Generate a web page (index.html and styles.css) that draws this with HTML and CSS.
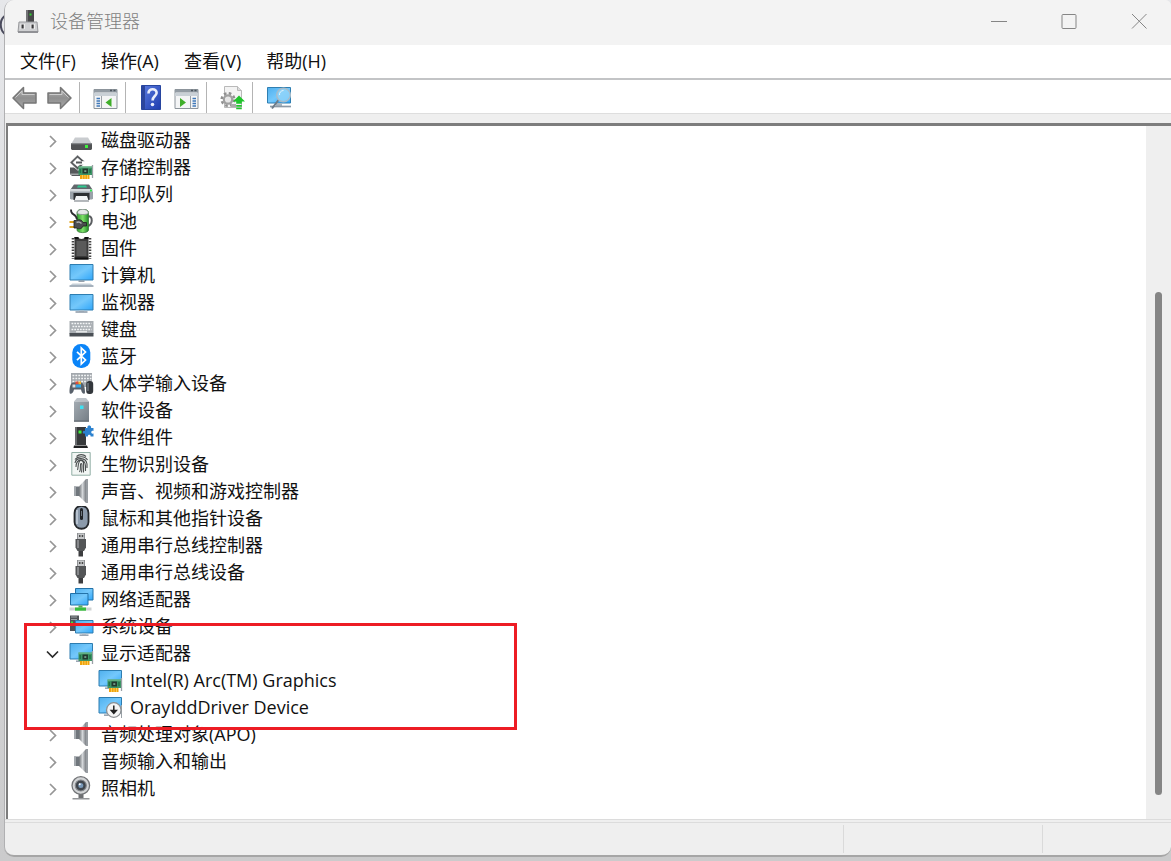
FILE: index.html
```html
<!DOCTYPE html>
<html lang="zh-CN">
<head>
  <meta charset="UTF-8">
  <meta name="viewport" content="width=device-width, initial-scale=1.0">
  <title>设备管理器</title>
  <link rel="stylesheet" href="styles.css">
</head>
<body>
  <!-- 图标定义 -->
  <svg class="icon-defs" aria-hidden="true">
    <defs>
      <linearGradient id="g-screen" x1="0" y1="0" x2="1" y2="1">
        <stop offset="0" stop-color="#4fb0ee"/><stop offset=".5" stop-color="#74c8fb"/><stop offset="1" stop-color="#2ea6fb"/>
      </linearGradient>
      <linearGradient id="g-metal" x1="0" y1="0" x2="1" y2="0">
        <stop offset="0" stop-color="#6f7377"/><stop offset=".5" stop-color="#d3d6d9"/><stop offset="1" stop-color="#7b7f84"/>
      </linearGradient>
      <linearGradient id="g-arrow" x1="0" y1="0" x2="0" y2="1">
        <stop offset="0" stop-color="#b5b5b5"/><stop offset=".5" stop-color="#8f8f8f"/><stop offset="1" stop-color="#a9a9a9"/>
      </linearGradient>
      <linearGradient id="g-help" x1="0" y1="0" x2="1" y2="1">
        <stop offset="0" stop-color="#5b7ce0"/><stop offset="1" stop-color="#1d3cae"/>
      </linearGradient>
      <linearGradient id="g-tower" x1="0" y1="0" x2="1" y2="1">
        <stop offset="0" stop-color="#a3abb2"/><stop offset="1" stop-color="#747d85"/>
      </linearGradient>
      <linearGradient id="g-green" x1="0" y1="0" x2="1" y2="0">
        <stop offset="0" stop-color="#2f9e2f"/><stop offset=".5" stop-color="#7fe06a"/><stop offset="1" stop-color="#1f8a26"/>
      </linearGradient>
    </defs>

    <symbol id="i-app" viewBox="0 0 22 25">
      <path d="M9 1h8v13H9z" fill="#48484a"/><path d="M9 1h2v13H9z" fill="#737376"/>
      <path d="M12.500 4.500h2v2h-2z" fill="#2fd02f"/>
      <path d="M2 13h18l1 10H1z" fill="#cfd0d2" stroke="#97989b"/>
      <path d="M1 22h20v2H1z" fill="#909195"/>
      <path d="M3.500 15h4.500v5H3.500zM13.500 15H18v5h-4.500z" fill="#eee"/><path d="M4.500 15.500h2.200v4H4.500zM14.500 15.500h2.200v4h-2.200z" fill="#3a3a3c"/>
    </symbol>
    <symbol id="i-back" viewBox="0 0 25 25">
      <path d="M1 13 11.500 2.500V8H24v10H11.500v5.500z" fill="url(#g-arrow)" stroke="#777" stroke-width="1.500" stroke-linejoin="round"/>
      <path d="M3.500 12.500 10 6v3.500h12.500" fill="none" stroke="#ccc"/>
    </symbol>
    <symbol id="i-forward" viewBox="0 0 25 25">
      <path d="M24 13 13.500 2.500V8H1v10h12.500v5.500z" fill="url(#g-arrow)" stroke="#777" stroke-width="1.500" stroke-linejoin="round"/>
      <path d="M2.500 9.500H15V6l6.500 6.500" fill="none" stroke="#ccc"/>
    </symbol>
    <symbol id="i-tree-pane" viewBox="0 0 25 25">
      <path d="M1 4.500h23v19H1z" fill="#f4f5f6" stroke="#8c949b"/>
      <path d="M1 5h23v2.500H1z" fill="#929ba3"/><path d="M1 8h23v3H1z" fill="#c9d0d6"/>
      <path d="M17 5.500h2M20.500 5.500h2" stroke="#4d565e" stroke-width="1.500"/>
      <path d="M8.500 11v12.500" stroke="#9ba2a8"/>
      <path d="M3.500 13.500H7M3.500 16H7M3.500 18.500H7M3.500 21H7" stroke="#3f78b9" stroke-width="1.300"/>
      <path d="M18.500 13v9l-6-4.500z" fill="#3fae2a"/>
    </symbol>
    <symbol id="i-action-pane" viewBox="0 0 25 25">
      <path d="M1 4.500h23v19H1z" fill="#f4f5f6" stroke="#8c949b"/>
      <path d="M1 5h23v2.500H1z" fill="#929ba3"/><path d="M1 8h23v3H1z" fill="#c9d0d6"/>
      <path d="M17 5.500h2M20.500 5.500h2" stroke="#4d565e" stroke-width="1.500"/>
      <path d="M16.500 11v12.500" stroke="#9ba2a8"/>
      <path d="M18.500 13.500H22M18.500 16H22M18.500 18.500H22M18.500 21H22" stroke="#3f78b9" stroke-width="1.300"/>
      <path d="M6 13v9l6-4.500z" fill="#3fae2a"/>
    </symbol>
    <symbol id="i-help" viewBox="0 0 25 25">
      <path d="M2.500.5h19v24h-19z" fill="url(#g-help)" stroke="#27459f"/>
      <path d="M3 1h3v23H3z" fill="#2b459c"/>
      <path d="M9.500 8.500C9.300 2.800 18 3 17.600 8c-.2 3-4 3.300-4 7.500" fill="none" stroke="#e9edfb" stroke-width="2.600"/>
      <circle cx="13.500" cy="19.500" r="1.800" fill="#e9edfb"/>
    </symbol>
    <symbol id="i-update" viewBox="0 0 25 25">
      <path d="M4.500 1.500h13l4 4v17h-17z" fill="#f3f3f3" stroke="#b9b9b9"/><path d="M17.500 1.500v4h4" fill="#ddd" stroke="#b9b9b9"/>
      <circle cx="8" cy="14.500" r="6.300" fill="none" stroke="#8f8f8f" stroke-width="2.500" stroke-dasharray="2.600 2.350"/>
      <circle cx="8" cy="14.500" r="4.200" fill="#e6e6e6" stroke="#a0a0a0" stroke-width="2.200"/>
      <path d="M11 20.500h5" stroke="#aaa" stroke-width="3"/>
      <path d="M19 10.500l6 6h-3.200v2.200h-5.600v-2.200H13zM16.200 20h5.600v1.700h-5.600zM16.200 22.700h5.600v1.500h-5.600z" fill="#1fc42b"/>
    </symbol>
    <symbol id="i-scan" viewBox="0 0 25 25">
      <path d="M1.500 2.500h23v15.500h-23z" fill="url(#g-screen)" stroke="#2f7fb2"/>
      <path d="M10 18h6v3h-6z" fill="#a9b6c1"/><path d="M4 21.500h21" stroke="#8b98a5" stroke-width="1.700"/>
      <path d="M12.500 15 6 23.500" stroke="#6d7b88" stroke-width="2"/>
      <circle cx="17.500" cy="10" r="6.800" fill="#8fd3f9" fill-opacity=".85" stroke="#a5bccb" stroke-width="1.500"/>
      <path d="M13.500 10a4 4 0 0 1 4-4.500" fill="none" stroke="#e5f5fd"/>
    </symbol>

    <symbol id="i-disk" viewBox="0 0 25 25">
      <path d="M6 9.500h13l3.500 6h-20z" fill="#c9cccf"/>
      <path d="M2 15h21v6l-1 1H3l-1-1z" fill="#505254"/><path d="M2 15h21v1.300H2z" fill="#85888b"/>
      <path d="M16 17h3v3h-3z" fill="#3ef03e"/>
    </symbol>
    <g id="p-board">
      <path d="M23.500 10v13" stroke="#9aa1a6" stroke-width="1.300"/>
      <path d="M11 19.500h9.500V24H11z" fill="#f0a30c"/><path d="M13.500 20v4M16 20v4M18.500 20v4" stroke="#fbd46b" stroke-width=".8"/>
      <path d="M9.500 11.500h13.500V20H9.500z" fill="#3d9465"/><path d="M9.500 11.500h13.500v1.200H9.500z" fill="#71ba8e"/>
      <path d="M13.500 13.500h5.500v5h-5.500z" fill="#22382e"/><path d="M15.300 15.200h2v1.700h-2z" fill="#79a58e"/>
      <path d="M11.200 14v4M21 14v4" stroke="#1c6b42" stroke-width="1.200"/>
    </g>
    <symbol id="i-storage" viewBox="0 0 25 25">
      <path d="M1 12.500h4l6 4v4.500H3l-2-2z" fill="#55585b"/><path d="M1 18.500h9v1.500H2z" fill="#a2a5a8"/>
      <path d="M8.500 0 16 6.500h-3.500L8.500 3 4 7.500l4.500 4L11 9.500h3.500L8.500 15 .8 7.500z" fill="#55585b" stroke="#fff" stroke-width=".6"/>
      <path d="M7 7.500h6" stroke="#55585b" stroke-width="2"/>
      <use href="#p-board"/>
    </symbol>
    <symbol id="i-printer" viewBox="0 0 25 25">
      <path d="M5 2.500h15l3.500 5h-22z" fill="#62676c"/><path d="M9 3.500h8l1 2H8z" fill="#2fc890"/>
      <path d="M1 7h23v9.500l-1 1H2l-1-1z" fill="#9aa2aa"/><path d="M1 7h23v2.500H1z" fill="#d5dade"/>
      <path d="M4.500 11h16v7h-16z" fill="#2c2f33"/><path d="M7 14h11l1.500 4.500H5.500z" fill="#f2f4f6"/>
      <path d="M5 18.500h15v1H5z" fill="#6d747b"/><path d="M21 7.500h2v2h-2z" fill="#2fe04c"/>
    </symbol>
    <symbol id="i-battery" viewBox="0 0 25 25">
      <path d="M18.500 7.500c6-2 5.500 10-.5 9.500" fill="none" stroke="#5b5e61" stroke-width="2"/>
      <path d="M8 3.500C8-1 19.500-1 19.500 3.500V21c0 3.500-11.500 3.500-11.500 0z" fill="url(#g-green)" stroke="#3b7a3c" stroke-width=".8"/>
      <path d="M8.300 4c0-5 11-5 11 0 0 2-11 2-11 0z" fill="#e4e8e8" stroke="#838a8a" stroke-width=".8"/>
      <path d="M2 .5C1.500 7 7 3.500 8 10.500" fill="none" stroke="#2d2f31" stroke-width="1.800"/>
      <path d="M.5 13H5M.5 18H5" stroke="#e0a51d" stroke-width="2"/>
      <path d="M5 11.500h2.500c3-1.500 5.500-.5 6.500 2h3.500v3.500H14c-1 3-4 3.500-6.500 2H5z" fill="#4b4d4f" stroke="#1c1d1e" stroke-width=".8"/>
      <path d="M7.500 13.500c2-1 4 0 5 1" fill="none" stroke="#a9abad" stroke-width="1.500"/>
    </symbol>
    <symbol id="i-chip" viewBox="0 0 25 25">
      <path d="M5.500 1h3.500c1 2.500 6 2.500 7 0h3.500v22.500h-14z" fill="#3b3b3b"/>
      <path d="M7.500 5h10v15h-10z" fill="#5a5a5a"/>
      <path d="M5.500 1h4v2h-4zM15.500 1h4v2h-4zM5.500 21.500h14v2h-14z" fill="#111"/>
      <path d="M4 2v21M21 2v21" stroke="#444" stroke-width="2.600" stroke-dasharray="1.500 1.400"/>
    </symbol>
    <symbol id="i-computer" viewBox="0 0 25 25">
      <path d="M1 1.500h23V17H1z" fill="url(#g-screen)" stroke="#2e7db0"/>
      <path d="M9.500 17.500h6v1.300h-6z" fill="#7e8b98"/>
      <path d="M3.500 20.500h18l3 2.500H.5z" fill="#c5cfd8"/><path d="M.5 22.500h24v1.200H.5z" fill="#8190a0"/>
    </symbol>
    <symbol id="i-monitor" viewBox="0 0 25 25">
      <path d="M1 4.500h23V20H1z" fill="url(#g-screen)" stroke="#2e7db0"/>
      <path d="M10 20.500h5v1h-5z" fill="#b5c1cb"/><path d="M6.500 21.300h12v1.400h-12z" fill="#8190a0"/>
    </symbol>
    <symbol id="i-keyboard" viewBox="0 0 25 25">
      <path d="M.5 4h24v13H.5z" fill="#a9aeb3"/><path d="M.5 16h24v3.500H.5z" fill="#4a5056"/>
      <path d="M2.500 6.500h20M3.500 9.500h19M2.500 12.500h20" stroke="#f3f5f6" stroke-width="1.700" stroke-dasharray="1.800 1"/>
      <path d="M7 14.800h11" stroke="#f3f5f6" stroke-width="1.200"/>
    </symbol>
    <symbol id="i-bluetooth" viewBox="0 0 25 25">
      <rect x="3.300" y="0" width="18" height="24" rx="8.500" fill="#0a84f8"/>
      <path d="M8 7.800 16.500 16 12.300 20V4l4.200 4L8 16.200" fill="none" stroke="#fff" stroke-width="1.700"/>
    </symbol>
    <symbol id="i-hid" viewBox="0 0 25 25">
      <path d="M2 2h21v14H2z" fill="#a4a9ae"/>
      <path d="M3.500 4.500h19M3.500 7.500h19M3.500 10.500h19" stroke="#f3f5f6" stroke-width="1.600" stroke-dasharray="1.800 1.100"/>
      <path d="M.5 21c0-5 1-9.500 4-9.500h7c3 0 4.500 4.500 4.500 9.500 0 3-3 2.500-4-2.500H5C4 23.500.5 24 .5 21z" fill="#59616b"/>
      <path d="M3.500 13.500h3v3h-3z" fill="#d8dde1"/>
      <path d="M6.500 10.500h3v3h-3z" fill="#e34b3b"/><path d="M9.500 10.500h2.500v3H9.500z" fill="#f4b52a"/><path d="M7 13.500h5v3H7z" fill="#32a7e8"/>
      <rect x="17.200" y="10" width="7" height="13" rx="3" fill="#33373c"/><path d="M19 12v8" stroke="#8d949b"/>
    </symbol>
    <symbol id="i-softdev" viewBox="0 0 25 25">
      <path d="M8 0h9l3 3.500H5z" fill="#bcc2c8"/><path d="M5 3.500h15v20H5z" fill="url(#g-tower)"/>
      <path d="M5 22.500h15v1.200H5z" fill="#5f676e"/><path d="M11 7.500h3.500V11H11z" fill="#3fe0f0"/>
    </symbol>
    <symbol id="i-softcomp" viewBox="0 0 25 25">
      <path d="M6 2h11v18H6z" fill="#37393b"/><path d="M6 2h2v18H6z" fill="#6a6c6f"/>
      <path d="M5 20.500h13l1 2.500H4.500z" fill="#1f2021"/><path d="M9.500 5.500h3v3h-3z" fill="#3bf03b"/>
      <path d="M16 3h2.500c-1-3.500 4.500-3.500 3.500 0h2.500v3c-3-1-3 3.500 0 2.500v3h-3c.8-2.500-3.300-2.500-2.500 0h-3v-3c-3 1-3-3.500 0-2.500z" fill="#2c82cf"/>
    </symbol>
    <symbol id="i-finger" viewBox="0 0 25 25">
      <path d="M2.800.5h18.400v22.700H2.800z" fill="#f2f6f4" stroke="#92afa6"/>
      <g fill="none" stroke="#4b4f50" stroke-width="1.100">
        <path d="M7.500 4.500c2.500-2.500 7-2.500 9.500 0M6 7.500c2.500-3.500 10-4 12.500.5M6 11c1-6 11-6 12 1v4M7 15c0-9 9.500-9 9.500-1v5M8.500 18c1-2 0-9.500 3.500-9.500s2.500 5 2.500 12M10.500 20c2-3 0-8 1.500-8.500s1 5 .5 9"/>
      </g>
    </symbol>
    <symbol id="i-speaker" viewBox="0 0 25 25">
      <path d="M5 7.500h5v9.500H5z" fill="#70767c"/><path d="M5 7.500h2v9.500H5z" fill="#a4a9ae"/>
      <path d="M10 7.500 17 0v24l-7-7z" fill="url(#g-metal)"/><path d="M17 0h2v24h-2z" fill="#989da2"/>
    </symbol>
    <symbol id="i-mouse" viewBox="0 0 25 25">
      <path d="M5.500 7c0-9.500 14-9.500 14 0v9c0 9-14 9-14 0z" fill="#8b9aab" stroke="#25282c" stroke-width="1.800"/>
      <path d="M8 4v14" stroke="#c7d1dc" stroke-width="1.500"/>
      <path d="M12.500 3.500v9" stroke="#202327" stroke-width="3" stroke-linecap="round"/><path d="M12.500 5v5" stroke="#6f7881"/>
    </symbol>
    <symbol id="i-usb" viewBox="0 0 25 25">
      <path d="M8.500 0h7v6.500h-7z" fill="#c4c6c8" stroke="#7b7d80" stroke-width=".8"/>
      <path d="M10 2h1.500v2H10zM12.700 2h1.500v2h-1.500z" fill="#4a4a4a"/>
      <path d="M6.500 6h10.500v8.500L15 18h-6.500l-2-3.500z" fill="#535557"/><path d="M8 7h2v8H8z" fill="#85878a"/>
      <path d="M9.500 18h4.500v5.500H9.500z" fill="#3c3d3f"/>
    </symbol>
    <symbol id="i-network" viewBox="0 0 25 25">
      <path d="M6.500 1.500h17.500V13H6.500z" fill="url(#g-screen)" stroke="#2372a8"/>
      <path d="M1.500 6.500H19V18H1.500z" fill="url(#g-screen)" stroke="#2372a8"/>
      <path d="M9.500 18.500h4v2.500h-4z" fill="#5fa85f"/>
      <path d="M.5 20.500h22v3H.5z" fill="#cfd3d3"/><path d="M6 20.500h11v3.200H6z" fill="#37bd3e"/>
    </symbol>
    <symbol id="i-system" viewBox="0 0 25 25">
      <path d="M1 1.500h9V17H1z" fill="#505459"/><path d="M2 3h6M2 5.500h6" stroke="#9da2a7"/><path d="M2 7.500h2v2H2z" fill="#42e142"/>
      <path d="M6.500 6.500H24V19H6.500z" fill="url(#g-screen)" stroke="#2e7db0"/>
      <path d="M13 19.500h4v1h-4z" fill="#b5c1cb"/><path d="M10.500 20.500h9v1.300h-9z" fill="#8190a0"/>
    </symbol>
    <symbol id="i-display" viewBox="0 0 25 25">
      <path d="M1 2.500h22.500V18H1z" fill="url(#g-screen)" stroke="#2e7db0"/><path d="M7 19.500h5v1.300H7z" fill="#8190a0"/>
      <use href="#p-board"/>
    </symbol>
    <symbol id="i-display-off" viewBox="0 0 25 25">
      <path d="M1 2.500h22.500V18H1z" fill="url(#g-screen)" stroke="#2e7db0"/><path d="M6 19.500h4v1.300H6z" fill="#8190a0"/>
      <path d="M23.500 10v13" stroke="#9aa1a6"/>
      <circle cx="15.800" cy="15" r="7.300" fill="#f5f5f5" stroke="#8d9093" stroke-width="1.300"/>
      <path d="M15.800 10.500v7M13.300 15.500l2.500 2.800 2.500-2.800z" fill="#222" stroke="#222" stroke-width="1.500"/>
    </symbol>
    <symbol id="i-camera" viewBox="0 0 25 25">
      <path d="M9.500 18h5v4h-5z" fill="#6d6f72"/><path d="M3.500 22h17v1.600h-17z" fill="#929497"/>
      <circle cx="11.800" cy="9.500" r="8.800" fill="#d2d4d6" stroke="#727477" stroke-width="1.300"/>
      <circle cx="11.800" cy="9.500" r="5.500" fill="#3f454c" stroke="#85888c" stroke-width="1.200"/>
      <circle cx="11.800" cy="9.500" r="2.500" fill="#7898b8"/><circle cx="10.700" cy="8.300" r="1" fill="#fff"/>
    </symbol>
    <symbol id="i-chevron" viewBox="0 0 18 18">
      <path d="M6 4 11.500 9.500 6 15" fill="none" stroke="#969696" stroke-width="1.700"/>
    </symbol>
    <symbol id="i-chevron-open" viewBox="0 0 18 18">
      <path d="M3 6.500 8.500 12 14 6.500" fill="none" stroke="#2b2b2b" stroke-width="1.700"/>
    </symbol>
  </svg>

  <svg class="backdrop-mark" viewBox="0 0 6 24" aria-hidden="true">
    <path d="M6 2C-1 6-1 17 6 22" fill="none" stroke="#4a4a5c" stroke-width="2"/>
  </svg>

  <div class="window">
    <header class="title-bar">
      <svg class="app-icon" aria-hidden="true"><use href="#i-app"/></svg>
      <h1>设备管理器</h1>
      <div class="window-controls">
        <button type="button" aria-label="最小化"><svg viewBox="0 0 16 16"><path d="M0 8.500h16"/></svg></button>
        <button type="button" aria-label="最大化"><svg viewBox="0 0 16 16"><rect x="1" y="1.500" width="14" height="14" rx="1"/></svg></button>
        <button type="button" aria-label="关闭"><svg viewBox="0 0 16 16"><path d="M1 1l14.500 14.500M15.500 1 1 15.500"/></svg></button>
      </div>
    </header>

    <nav class="menu-bar">
      <button type="button">文件(F)</button>
      <button type="button">操作(A)</button>
      <button type="button">查看(V)</button>
      <button type="button">帮助(H)</button>
    </nav>

    <div class="tool-bar" role="toolbar" aria-label="工具栏">
      <div class="tool-group">
        <button type="button" aria-label="后退"><svg><use href="#i-back"/></svg></button>
        <button type="button" aria-label="前进"><svg><use href="#i-forward"/></svg></button>
      </div>
      <div class="tool-group">
        <button type="button" aria-label="显示/隐藏控制台树"><svg><use href="#i-tree-pane"/></svg></button>
      </div>
      <div class="tool-group">
        <button type="button" aria-label="帮助"><svg><use href="#i-help"/></svg></button>
        <button type="button" aria-label="显示/隐藏操作窗格"><svg><use href="#i-action-pane"/></svg></button>
      </div>
      <div class="tool-group">
        <button type="button" aria-label="更新驱动程序"><svg><use href="#i-update"/></svg></button>
      </div>
      <div class="tool-group">
        <button type="button" aria-label="扫描检测硬件改动"><svg><use href="#i-scan"/></svg></button>
      </div>
    </div>

    <main class="content">
      <!-- 设备树 -->
      <ul class="tree">
        <li><div class="row"><button type="button" class="expander" aria-label="展开"><svg><use href="#i-chevron"/></svg></button><svg class="icon"><use href="#i-disk"/></svg><span>磁盘驱动器</span></div></li>
        <li><div class="row"><button type="button" class="expander" aria-label="展开"><svg><use href="#i-chevron"/></svg></button><svg class="icon"><use href="#i-storage"/></svg><span>存储控制器</span></div></li>
        <li><div class="row"><button type="button" class="expander" aria-label="展开"><svg><use href="#i-chevron"/></svg></button><svg class="icon"><use href="#i-printer"/></svg><span>打印队列</span></div></li>
        <li><div class="row"><button type="button" class="expander" aria-label="展开"><svg><use href="#i-chevron"/></svg></button><svg class="icon"><use href="#i-battery"/></svg><span>电池</span></div></li>
        <li><div class="row"><button type="button" class="expander" aria-label="展开"><svg><use href="#i-chevron"/></svg></button><svg class="icon"><use href="#i-chip"/></svg><span>固件</span></div></li>
        <li><div class="row"><button type="button" class="expander" aria-label="展开"><svg><use href="#i-chevron"/></svg></button><svg class="icon"><use href="#i-computer"/></svg><span>计算机</span></div></li>
        <li><div class="row"><button type="button" class="expander" aria-label="展开"><svg><use href="#i-chevron"/></svg></button><svg class="icon"><use href="#i-monitor"/></svg><span>监视器</span></div></li>
        <li><div class="row"><button type="button" class="expander" aria-label="展开"><svg><use href="#i-chevron"/></svg></button><svg class="icon"><use href="#i-keyboard"/></svg><span>键盘</span></div></li>
        <li><div class="row"><button type="button" class="expander" aria-label="展开"><svg><use href="#i-chevron"/></svg></button><svg class="icon"><use href="#i-bluetooth"/></svg><span>蓝牙</span></div></li>
        <li><div class="row"><button type="button" class="expander" aria-label="展开"><svg><use href="#i-chevron"/></svg></button><svg class="icon"><use href="#i-hid"/></svg><span>人体学输入设备</span></div></li>
        <li><div class="row"><button type="button" class="expander" aria-label="展开"><svg><use href="#i-chevron"/></svg></button><svg class="icon"><use href="#i-softdev"/></svg><span>软件设备</span></div></li>
        <li><div class="row"><button type="button" class="expander" aria-label="展开"><svg><use href="#i-chevron"/></svg></button><svg class="icon"><use href="#i-softcomp"/></svg><span>软件组件</span></div></li>
        <li><div class="row"><button type="button" class="expander" aria-label="展开"><svg><use href="#i-chevron"/></svg></button><svg class="icon"><use href="#i-finger"/></svg><span>生物识别设备</span></div></li>
        <li><div class="row"><button type="button" class="expander" aria-label="展开"><svg><use href="#i-chevron"/></svg></button><svg class="icon"><use href="#i-speaker"/></svg><span>声音、视频和游戏控制器</span></div></li>
        <li><div class="row"><button type="button" class="expander" aria-label="展开"><svg><use href="#i-chevron"/></svg></button><svg class="icon"><use href="#i-mouse"/></svg><span>鼠标和其他指针设备</span></div></li>
        <li><div class="row"><button type="button" class="expander" aria-label="展开"><svg><use href="#i-chevron"/></svg></button><svg class="icon"><use href="#i-usb"/></svg><span>通用串行总线控制器</span></div></li>
        <li><div class="row"><button type="button" class="expander" aria-label="展开"><svg><use href="#i-chevron"/></svg></button><svg class="icon"><use href="#i-usb"/></svg><span>通用串行总线设备</span></div></li>
        <li><div class="row"><button type="button" class="expander" aria-label="展开"><svg><use href="#i-chevron"/></svg></button><svg class="icon"><use href="#i-network"/></svg><span>网络适配器</span></div></li>
        <li><div class="row"><button type="button" class="expander" aria-label="展开"><svg><use href="#i-chevron"/></svg></button><svg class="icon"><use href="#i-system"/></svg><span>系统设备</span></div></li>
        <li class="marked">
          <div class="row"><button type="button" class="expander" aria-label="折叠"><svg><use href="#i-chevron-open"/></svg></button><svg class="icon"><use href="#i-display"/></svg><span>显示适配器</span></div>
          <ul class="children">
            <li><div class="row"><svg class="icon"><use href="#i-display"/></svg><span>Intel(R) Arc(TM) Graphics</span></div></li>
            <li><div class="row"><svg class="icon"><use href="#i-display-off"/></svg><span>OrayIddDriver Device</span></div></li>
          </ul>
        </li>
        <li><div class="row"><button type="button" class="expander" aria-label="展开"><svg><use href="#i-chevron"/></svg></button><svg class="icon"><use href="#i-speaker"/></svg><span>音频处理对象(APO)</span></div></li>
        <li><div class="row"><button type="button" class="expander" aria-label="展开"><svg><use href="#i-chevron"/></svg></button><svg class="icon"><use href="#i-speaker"/></svg><span>音频输入和输出</span></div></li>
        <li><div class="row"><button type="button" class="expander" aria-label="展开"><svg><use href="#i-chevron"/></svg></button><svg class="icon"><use href="#i-camera"/></svg><span>照相机</span></div></li>
      </ul>
      <div class="scroll-track"><div class="scroll-thumb"></div></div>
    </main>

    <footer class="status-bar">
      <div></div>
      <div></div>
      <div></div>
    </footer>
  </div>
</body>
</html>
```
FILE: styles.css
```css
/* 全局样式 */
*,
*::before,
*::after {
  box-sizing: border-box;
}
body {
  margin: 0;
  padding: 0 0 4px 4px;
  min-height: 100vh;
  display: flex;
  background: linear-gradient(#e6e7ea, #cbcbcc);
  font-family: "Open Sans", "Noto Sans CJK SC", sans-serif;
  font-size: 18px;
  line-height: 27px;
  color: #111;
}
ul {
  list-style: none;
  margin: 0;
  padding: 0;
}
button {
  border: 0;
  padding: 0;
  background: none;
  font: inherit;
  color: inherit;
}
svg {
  display: block;
}
.icon-defs {
  position: absolute;
  width: 0;
  height: 0;
}
.backdrop-mark {
  position: absolute;
  left: 0;
  top: 13px;
  width: 6px;
  height: 24px;
}

/* 窗口 */
.window {
  position: relative;
  flex: 1;
  display: flex;
  flex-direction: column;
  background: #efefef;
  border-left: 1px solid #b0b0b2;
  border-bottom: 2px solid #a6a6a6;
  border-radius: 10px 6px 10px 10px;
  overflow: hidden;
}

/* 标题栏 */
.title-bar {
  display: flex;
  align-items: center;
  height: 45px;
  padding: 0 0 3px 12px;
  gap: 11px;
  background: #f3f3f3;
  color: #7f7f7f;
}
.title-bar h1 {
  margin: 0;
  font-size: 18px;
  font-weight: 300;
}
.app-icon {
  width: 22px;
  height: 25px;
}
.window-controls {
  display: flex;
  gap: 6px;
  margin-left: auto;
}
.window-controls button {
  display: flex;
  justify-content: center;
  width: 64px;
}
.window-controls svg {
  width: 16px;
  height: 16px;
  fill: none;
  stroke: #858585;
}

/* 菜单栏 */
.menu-bar {
  display: flex;
  align-items: center;
  gap: 1px;
  height: 35px;
  padding-left: 3px;
  background: #fff;
  border-bottom: 2px solid #c3c4c6;
}
.menu-bar button {
  padding: 0 12px;
}

/* 工具栏 */
.tool-bar {
  display: flex;
  height: 34px;
  background: #fff;
  border-bottom: 1px solid #dedede;
  margin-bottom: 9px;
}
.tool-group {
  display: flex;
  align-items: center;
  gap: 10px;
  margin-top: 2px;
  padding: 0 7px 0 13px;
  border-right: 1px solid #b4b4b4;
}
.tool-group:first-child {
  padding-left: 7px;
}
.tool-group:last-child {
  border-right: 0;
}
.tool-group svg {
  width: 25px;
  height: 25px;
}

/* 设备树 */
.content {
  flex: 1;
  display: flex;
  margin-left: 1px;
  background: #fff;
  border-top: 3px solid #7d7d7d;
  border-left: 2px solid #7d7d7d;
}
.tree {
  flex: 1;
  padding: 1px 0 16px;
}
.row {
  display: flex;
  align-items: center;
  gap: 7px;
  height: 27px;
  padding-left: 36px;
}
.children .row {
  padding-left: 90px;
}
.expander svg {
  width: 18px;
  height: 18px;
}
.icon {
  width: 25px;
  height: 25px;
}

/* 红色标注框 */
.marked {
  position: relative;
}
.marked::after {
  content: "";
  position: absolute;
  top: -17px;
  bottom: -9px;
  left: 16px;
  width: 493px;
  border: 3px solid #ed1c24;
}

/* 滚动条 */
.scroll-track {
  display: flex;
  flex-direction: column;
  align-items: center;
  width: 25px;
  background: #efefef;
}
.scroll-track::before {
  content: "";
  flex: 48;
}
.scroll-track::after {
  content: "";
  flex: 7;
}
.scroll-thumb {
  flex: 145;
  width: 7px;
  border-radius: 4px;
  background: #858585;
}

/* 状态栏 */
.status-bar {
  display: grid;
  grid-template-columns: 1fr 199px 129px;
  height: 36px;
  padding: 2px 0;
  border-top: 4px double #dcdcdc;
}
.status-bar div + div {
  border-left: 1px solid #dadada;
}
```
